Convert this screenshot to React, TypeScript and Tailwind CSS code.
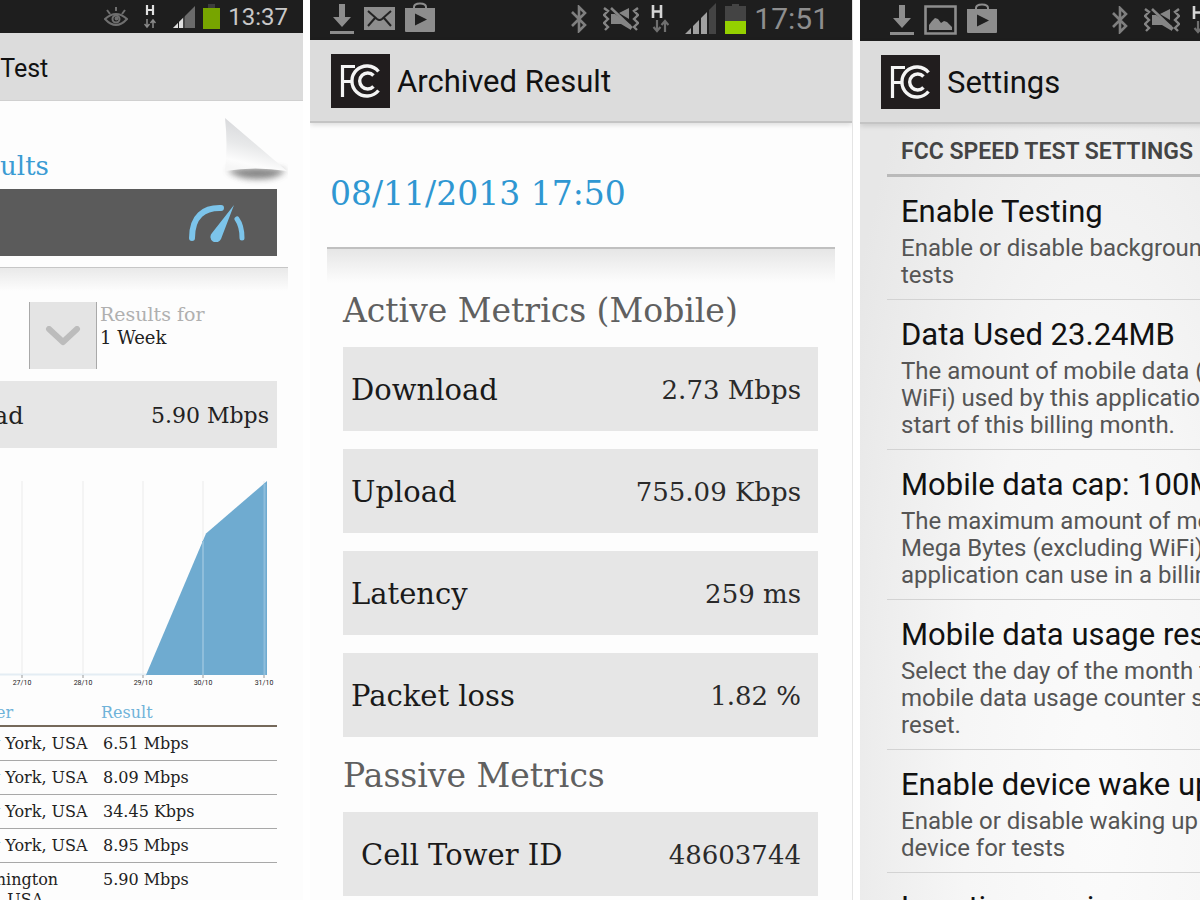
import React from "react";

const SLAB = "font-['DejaVu_Serif','Liberation_Serif',serif]";
const SANS = "font-[Roboto,'Liberation_Sans',sans-serif]";

function DownloadIcon() {
  return (
    <svg width="24" height="32" viewBox="0 0 24 32" fill="#8d8d8d" aria-hidden="true">
      <path d="M9 1h6v13h6l-9 10-9-10h6z" />
      <path d="M0 28h24v3H0z" />
    </svg>
  );
}

function MailIcon() {
  return (
    <svg width="31" height="23" viewBox="0 0 31 23" aria-hidden="true">
      <path d="M0 0h31v23H0z" fill="#8d8d8d" />
      <path d="M4 4l9 8q2.500 2 5 0l9-8M4 19l7-8M27 19l-7-8" fill="none" stroke="#222" strokeWidth="2" />
    </svg>
  );
}

function ImageIcon() {
  return (
    <svg width="33" height="30" viewBox="0 0 33 30" aria-hidden="true">
      <path d="M1.500 1.500h30v27h-30z" fill="none" stroke="#8d8d8d" strokeWidth="2.600" />
      <path d="M5 25v-5l3-4 3-3 3 1 3 4 3-2 3 1 5 5v3z" fill="#8d8d8d" />
    </svg>
  );
}

function ShopIcon() {
  return (
    <svg className="mb-1" width="30" height="30" viewBox="0 0 30 30" aria-hidden="true">
      <path d="M9 7V5q0-3.500 6-3.500T21 5v2" fill="none" stroke="#8d8d8d" strokeWidth="2" />
      <path d="M0 6h30v23q0 1-1 1H1q-1 0-1-1z" fill="#8d8d8d" />
      <path d="M10 11.500v12L22 17.500z" fill="#1e1e1e" />
    </svg>
  );
}

function BluetoothIcon() {
  return (
    <svg width="16" height="28" viewBox="0 0 16 28" fill="none" stroke="#7f7f7f" strokeWidth="2.600" aria-hidden="true">
      <path d="M1 7l13 13-6 6V2l6 6L1 21" />
    </svg>
  );
}

function VibrateIcon() {
  return (
    <svg width="36" height="24" viewBox="0 0 36 24" aria-hidden="true">
      <g fill="none" stroke="#858585" strokeWidth="2.400">
        <path d="M1 1l4 3-4 4 4 4-4 4 4 4-3 3M35 1l-4 3 4 4-4 4 4 4-4 4 3 3" />
      </g>
      <path d="M8 7h4l16 11v5l-10-6H8z" fill="#858585" />
      <path d="M16 6l10-5v11z" fill="#858585" />
      <path d="M8 1l21 20" stroke="#858585" strokeWidth="2.500" />
    </svg>
  );
}

function DataIcon({ small = false }: { small?: boolean }) {
  return small ? (
    <svg width="12" height="24" viewBox="0 0 12 24" fill="none" aria-hidden="true">
      <path d="M3 0v10M9 0v10M3 5h6" stroke="#e0e0e0" strokeWidth="2.200" />
      <path d="M3 14v8M0.500 19L3 22l2.500-3M9 23v-8M6.500 18L9 15l2.500 3" stroke="#8a8a8a" strokeWidth="1.500" />
    </svg>
  ) : (
    <svg width="18" height="28" viewBox="0 0 18 28" fill="none" aria-hidden="true">
      <path d="M2 0v13M10 0v13M2 6.500h8" stroke="#d5d5d5" strokeWidth="2.600" />
      <path d="M6 15v11M2.500 22L6 26l3.500-4M14 27V16M10.500 20l3.500-4 3.500 4" stroke="#6f6f6f" strokeWidth="2.200" />
    </svg>
  );
}

function SignalIcon({ small = false }: { small?: boolean }) {
  return small ? (
    <svg width="22" height="22" viewBox="0 0 22 22" aria-hidden="true">
      <path d="M0 22L22 0v22z" fill="#6a6a6a" />
      <path d="M0 22l5-5v5zM6 22v-6l4-4v10z" fill="#dedede" />
      <path d="M11 22V1M5.500 22v-7" stroke="#1e1e1e" />
    </svg>
  ) : (
    <svg width="32" height="31" viewBox="0 0 32 31" aria-hidden="true">
      <path d="M0 31l6-6v6zM8 31V23l6-6v14zM16 31V15l6-6v22z" fill="#a0a0a0" />
      <path d="M24 31V7l7-7v31z" fill="#444" />
    </svg>
  );
}

function EyeIcon() {
  return (
    <svg width="24" height="20" viewBox="0 0 24 20" fill="none" stroke="#6f6f6f" strokeWidth="2" aria-hidden="true">
      <path d="M1 12q11-10 22 0-11 12-22 0z" />
      <circle cx="12" cy="12" r="3.500" />
      <path d="M12 0v4M3 3l3 4M21 3l-3 4" />
      <circle cx="12.500" cy="11.500" r="1" fill="#999" />
    </svg>
  );
}

function FccLogo() {
  return (
    <svg className="shrink-0" width="59" height="54" viewBox="0 0 59 54" role="img" aria-label="FCC">
      <path d="M0 0h59v54H0z" fill="#211d1e" />
      <g fill="none" stroke="#f4f4f4">
        <path d="M11.500 43V12.500H24M11.500 27.500H20" strokeWidth="3.200" />
        <path d="M47.500 17.500A15 15 0 1 0 47.500 36.500" strokeWidth="3.400" />
        <path d="M42.500 21.500A8 8 0 1 0 42.500 32.500" strokeWidth="3.400" />
      </g>
    </svg>
  );
}

function StatusBar({ className, picture = false }: { className: string; picture?: boolean }) {
  return (
    <div className={`flex items-center bg-[#1e1e1e] ${className}`}>
      <div className="flex items-center gap-2.5">
        <DownloadIcon />
        {picture ? <ImageIcon /> : <MailIcon />}
        <ShopIcon />
      </div>
      <div className="ml-auto flex items-center">
        <BluetoothIcon />
        <span className="ml-4"><VibrateIcon /></span>
        <span className="ml-3"><DataIcon /></span>
        <span className="ml-4"><SignalIcon /></span>
        <svg className="ml-2" width="21" height="30" viewBox="0 0 21 30" aria-hidden="true">
          <path d="M7 0h7v2h7v15H0V2h7z" fill="#444" />
          <path d="M0 17h21v13H0z" fill="#94d000" />
        </svg>
        <span className="ml-2 text-[30px] leading-8 text-[#8e8e8e]">17:51</span>
      </div>
    </div>
  );
}

function TitleBar({ title }: { title: string }) {
  return (
    <header className="flex h-[83px] items-center gap-[7px] border-b-2 border-[#c4c4c4] bg-[#dcdcdc] px-[21px] shadow-[0_2px_5px_rgba(0,0,0,0.13)]">
      <FccLogo />
      <h1 className="pt-1 text-[31px] whitespace-nowrap text-[#111]">{title}</h1>
    </header>
  );
}

const servers = [
  ["New York, USA", "6.51 Mbps"],
  ["New York, USA", "8.09 Mbps"],
  ["New York, USA", "34.45 Kbps"],
  ["New York, USA", "8.95 Mbps"],
  ["Washington D.C., USA", "5.90 Mbps"],
];

const ticks = [
  { x: 22, label: "27/10" },
  { x: 83, label: "28/10" },
  { x: 143, label: "29/10" },
  { x: 203, label: "30/10" },
  { x: 264, label: "31/10" },
];

function HistoryChart() {
  return (
    <svg className="mt-8 ml-[137px] block" width="303" height="210" viewBox="0 0 303 210" role="img" aria-label="Download history">
      {ticks.map((t) => (
        <path key={t.label} d={`M${t.x} 1v194`} stroke="#f4f4f4" strokeWidth="2" />
      ))}
      <path d="M0 194.500h147" stroke="#e4edf4" strokeWidth="2" />
      <path d="M146 195L206 53.500 267 1v194z" fill="#6fabd0" />
      <path d="M203 61v134M264.500 4v191" stroke="#8fbedb" strokeWidth="2" />
      {ticks.map((t) => (
        <g key={t.label}>
          <path d={`M${t.x} 195v3`} stroke="#999" />
          <text x={t.x} y="205" textAnchor="middle" fontSize="7" fill="#222" fontFamily="Roboto, sans-serif">
            {t.label}
          </text>
        </g>
      ))}
    </svg>
  );
}

function HistoryScreen() {
  return (
    <section className="flex min-w-0 justify-end overflow-hidden bg-[#fdfdfd]">
      <div className="w-[440px] shrink-0">
        <div className="flex h-[33px] items-center justify-end bg-[#1e1e1e] pr-[15px]">
          <EyeIcon />
          <span className="ml-4"><DataIcon small /></span>
          <span className="ml-[17px]"><SignalIcon small /></span>
          <svg className="ml-2" width="17" height="25" viewBox="0 0 17 25" aria-hidden="true">
            <path d="M5 0h7v4H5z" fill="#3c3c3c" />
            <path d="M0 4h17v21H0z" fill="#77a500" />
          </svg>
          <span className="ml-2 text-[24px] leading-7 text-[#c8c8c8]">13:37</span>
        </div>
        <header className="flex h-[68px] items-center border-b border-[#d0d0d0] bg-[#dcdcdc] pt-1 pl-[62px]">
          <h1 className="text-[25px] text-[#111]">Speed Test</h1>
        </header>

        <div className="flex h-[88px] items-start justify-between pr-[15px] pl-[26px]">
          <h2 className={`pt-[45px] text-[26px] leading-10 text-[#3a9bd3] ${SLAB}`}>Test Results</h2>
          <svg className="mt-4" width="66" height="70" viewBox="0 0 66 70" aria-hidden="true">
            <defs>
              <linearGradient id="fold" x1="0.600" y1="0.100" x2="0.350" y2="1">
                <stop offset="0" stopColor="#d6d7da" />
                <stop offset="0.500" stopColor="#e8e9ea" />
                <stop offset="0.850" stopColor="#fcfcfc" />
                <stop offset="1" stopColor="#f6f6f6" />
              </linearGradient>
              <filter id="soft" x="-20%" y="-100%" width="140%" height="300%">
                <feGaussianBlur stdDeviation="3" />
              </filter>
            </defs>
            <path d="M5 53q30-5 59 0-8 9-27 9-20 1-32-9z" fill="#555" opacity="0.7" filter="url(#soft)" />
            <path d="M3 1L65 54q-32-5-62 0Q6 28 3 1z" fill="url(#fold)" />
          </svg>
        </div>

        <div className="mr-[26px] ml-[27px] flex h-[67px] items-center justify-end bg-[#5b5b5b] pr-8">
          <svg width="56" height="38" viewBox="0 0 56 38" fill="none" stroke="#7cc4ea" strokeWidth="6" strokeLinecap="round" aria-hidden="true">
            <path d="M3 34C3 12 15 3.500 32 4" />
            <path d="M48 15Q53 22 53 34" strokeWidth="5" />
            <path d="M45 1L23 29a5.500 5.500 0 1 0 9 6z" fill="#7cc4ea" stroke="none" />
          </svg>
        </div>

        <div className="mt-[11px] mr-[15px] h-6 border-t border-[#c6c6c6] bg-linear-to-b from-[#e9e9e9] to-[#fdfdfd]" />

        <div className={`mt-[11px] flex h-[67px] pl-[132px] ${SLAB}`}>
          <span className="w-[34px] pt-1 text-[18px] text-[#888]">:</span>
          <button aria-label="Choose period" className="flex w-[68px] items-center justify-center border-x border-[#a9a9a9] bg-[#e4e4e4]">
            <svg width="36" height="20" viewBox="0 0 36 20" fill="none" stroke="#bcbcbc" strokeWidth="6" strokeLinecap="round" strokeLinejoin="round" aria-hidden="true">
              <path d="M4 3l14 13L32 3" />
            </svg>
          </button>
          <div className="pl-[3px] text-[#b0b0b0]">
            <div className="text-[19px] leading-6">Results for</div>
            <div className="text-[18px] leading-6 text-[#222]">1 Week</div>
          </div>
        </div>

        <div className={`mt-3 mr-[26px] ml-[27px] flex h-[67px] items-center justify-between bg-[#e6e6e6] pt-0.5 pr-2 pl-3 text-[#222] ${SLAB}`}>
          <span className="text-[24px]">Download</span>
          <span className="text-[22px]">5.90 Mbps</span>
        </div>

        <HistoryChart />

        <table className={`mt-3 ml-24 w-[318px] table-fixed text-left text-[16px] leading-5 text-[#222] ${SLAB}`}>
          <thead>
            <tr className="border-b-2 border-[#75695a] text-[#6fb3d9]">
              <th className="w-[142px] pt-px pb-0.5 font-normal">Server</th>
              <th className="pt-px pb-0.5 font-normal">Result</th>
            </tr>
          </thead>
          <tbody>
            {servers.map(([server, result], i) => (
              <tr key={i} className="border-b border-[#a8a8a8] align-top">
                <td className="pt-[7px] pr-2 pb-1.5 pl-1">{server}</td>
                <td className="pt-[7px] pb-1.5 pl-0.5">{result}</td>
              </tr>
            ))}
          </tbody>
        </table>
      </div>
    </section>
  );
}

function Metric({ name, value, inset = false }: { name: string; value: string; inset?: boolean }) {
  return (
    <div className={`flex h-[84px] items-center justify-between bg-[#e6e6e6] pt-[3px] pr-[17px] ${inset ? "pl-[18px]" : "pl-2"}`}>
      <dt className="text-[29px] text-[#1a1a1a]">{name}</dt>
      <dd className="text-[26px] text-[#2a2a2a]">{value}</dd>
    </div>
  );
}

function ResultScreen() {
  return (
    <section className="min-w-0 overflow-hidden border-r border-[#e4e4e4] bg-[#fdfdfd]">
      <StatusBar className="h-10 pr-[23px] pb-[3px] pl-5" />
      <TitleBar title="Archived Result" />
      <div className={SLAB}>
        <h2 className="px-5 pt-[51px] text-[33px] leading-10 text-[#2f97d2]">08/11/2013 17:50</h2>
        <div className="mx-[17px] mt-[33px] h-9 border-t-2 border-[#c0c0c0] bg-linear-to-b from-[#e6e6e6] to-[#fdfdfd]" />
        <div className="pr-[34px] pl-[33px]">
          <h3 className="mt-2 text-[33px] leading-10 text-[#606060]">Active Metrics (Mobile)</h3>
          <dl className="mt-4 flex flex-col gap-[18px]">
            <Metric name="Download" value="2.73 Mbps" />
            <Metric name="Upload" value="755.09 Kbps" />
            <Metric name="Latency" value="259 ms" />
            <Metric name="Packet loss" value="1.82 %" />
          </dl>
          <h3 className="mt-[19px] text-[33px] leading-10 text-[#606060]">Passive Metrics</h3>
          <dl className="mt-4">
            <Metric name="Cell Tower ID" value="48603744" inset />
          </dl>
        </div>
      </div>
    </section>
  );
}

const settings = [
  { title: "Enable Testing", lines: ["Enable or disable background", "tests"] },
  {
    title: "Data Used 23.24MB",
    lines: ["The amount of mobile data (excluding", "WiFi) used by this application since the", "start of this billing month."],
  },
  {
    title: "Mobile data cap: 100MB",
    lines: ["The maximum amount of mobile data in", "Mega Bytes (excluding WiFi) that this", "application can use in a billing month."],
  },
  {
    title: "Mobile data usage reset",
    lines: ["Select the day of the month that the", "mobile data usage counter should be", "reset."],
  },
  { title: "Enable device wake up", lines: ["Enable or disable waking up the", "device for tests"] },
  { title: "Location service", lines: ["Choose the location service"] },
];

function SettingsScreen() {
  return (
    <section className="min-w-0 overflow-hidden bg-[radial-gradient(ellipse_at_70%_90%,#fbfbfb_0%,#f6f6f6_40%,#e7e7e7_85%)]">
      <div className="w-[543px]">
        <StatusBar className="h-[41px] pr-[33px] pb-0.5 pl-[30px]" picture />
        <TitleBar title="Settings" />
        <div className="mx-[27px]">
          <h2 className="border-b-[3px] border-[#bababa] px-3.5 pt-3 pb-1.5 text-[23px] leading-8 font-semibold text-[#444]">
            FCC SPEED TEST SETTINGS
          </h2>
          <ul>
            {settings.map((s) => (
              <li key={s.title} className="border-b border-[#d3d3d3] px-3.5 pt-3 pb-2.5 whitespace-nowrap">
                <h3 className="mb-px text-[31px] leading-[45px] text-[#111]">{s.title}</h3>
                {s.lines.map((line) => (
                  <p key={line} className="text-[24px] leading-[27px] text-[#555]">{line}</p>
                ))}
              </li>
            ))}
          </ul>
        </div>
      </div>
    </section>
  );
}

export default function App() {
  return (
    <main className={`grid h-screen grid-cols-[303fr_543fr_340fr] gap-x-[7px] overflow-hidden bg-white ${SANS}`}>
      <HistoryScreen />
      <ResultScreen />
      <SettingsScreen />
    </main>
  );
}
